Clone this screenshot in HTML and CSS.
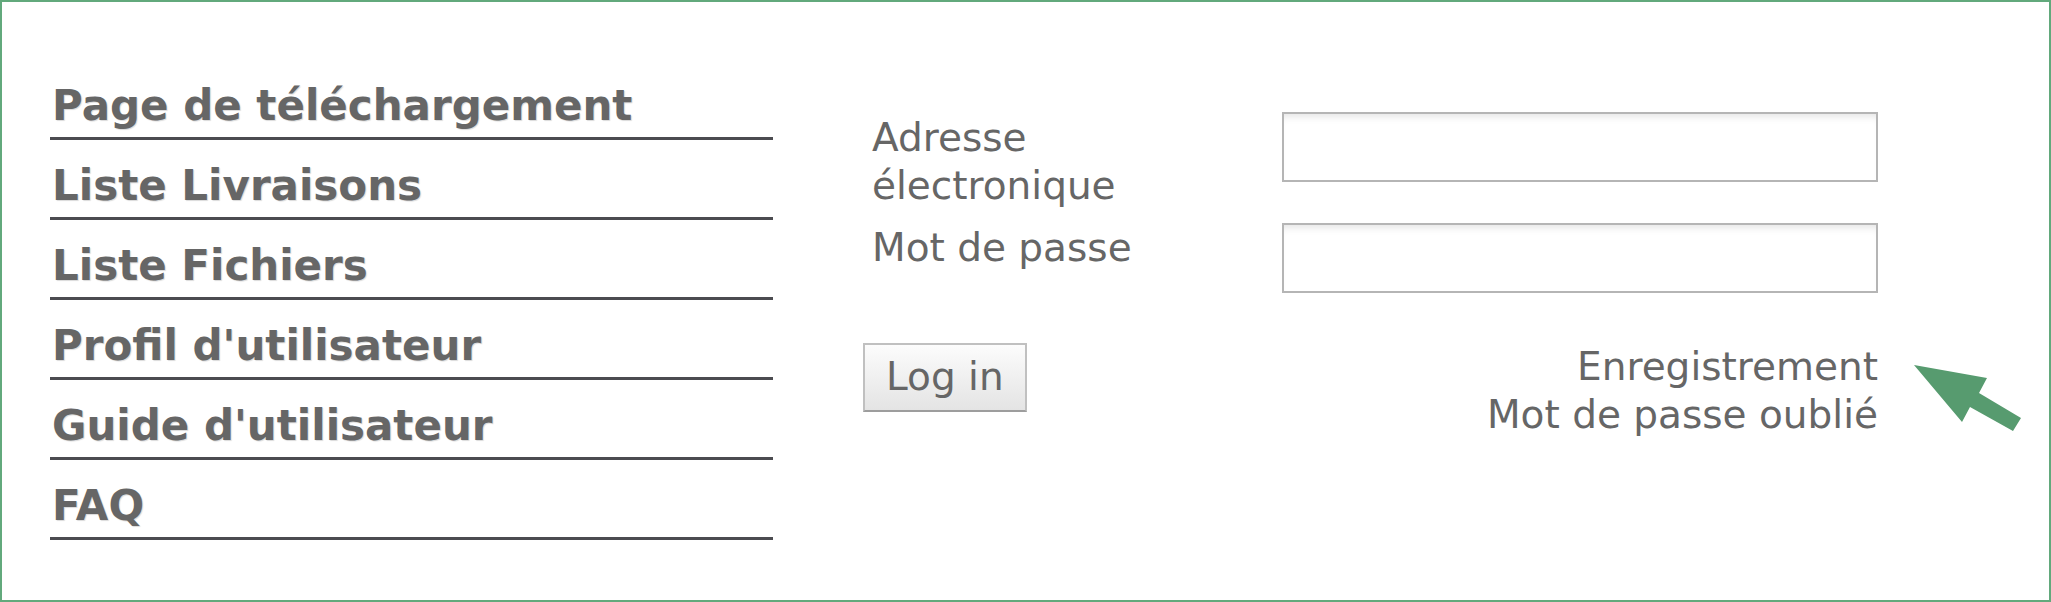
FILE: index.html
```html
<!DOCTYPE html>
<html lang="fr">
<head>
  <meta charset="UTF-8">
  <title>Connexion</title>
  <link rel="stylesheet" href="styles.css">
</head>
<body>
  <div class="frame">
    <!-- Menu de gauche -->
    <ul class="menu">
      <li><a href="#">Page de téléchargement</a></li>
      <li><a href="#">Liste Livraisons</a></li>
      <li><a href="#">Liste Fichiers</a></li>
      <li><a href="#">Profil d'utilisateur</a></li>
      <li><a href="#">Guide d'utilisateur</a></li>
      <li><a href="#">FAQ</a></li>
    </ul>

    <!-- Formulaire de connexion -->
    <form class="login" onsubmit="return false">
      <div class="fields">
        <label for="email">Adresse<br>électronique</label>
        <input type="text" id="email">
        <label for="pass">Mot de passe</label>
        <input type="password" id="pass" class="second">
      </div>
      <div class="actions">
        <button type="submit">Log in</button>
        <div class="links">
          <a href="#">Enregistrement</a>
          <a href="#">Mot de passe oublié</a>
        </div>
      </div>
    </form>

    <svg class="pointer" width="120" height="80" viewBox="1910 360 120 80">
      <polygon points="1914,365 1987,378 1979,393 2021,418 2013,431 1970,407 1962,422" fill="#579b6f"/>
    </svg>
  </div>
</body>
</html>
```

FILE: styles.css
```css
body {
  margin: 0;
  font-family: 'DejaVu Sans', 'Verdana', sans-serif;
  color: #666;
  background: #fff;
}

.frame {
  position: relative;
  box-sizing: border-box;
  width: 2051px;
  height: 602px;
  border: 2px solid #62a97c;
  display: flex;
  align-items: flex-start;
  gap: 90px;
  padding: 58px 0 0 48px;
}

.menu {
  list-style: none;
  margin: 0;
  padding: 0;
  width: 723px;
}

.menu li {
  padding: 22px 0 7px 2px;
  border-bottom: 3px solid #4b4b50;
  font-size: 42px;
  line-height: 48px;
}

.menu a {
  font-weight: bold;
  color: #666;
  text-decoration: none;
  text-shadow: 1px 1px 1px rgba(0, 0, 0, 0.15);
}

.login {
  margin-top: 52px;
  display: flex;
  flex-direction: column;
  width: 1015px;
}

.fields {
  display: grid;
  grid-template-columns: 419px 596px;
  row-gap: 12px;
  align-items: start;
}

.fields label {
  font-size: 39px;
  line-height: 48px;
  padding: 2px 0 0 9px;
}

.fields input {
  box-sizing: border-box;
  height: 70px;
  width: 596px;
  margin: 0;
  border: 2px solid #b5b5b5;
  background: #fff;
  box-shadow: inset 0 8px 8px -6px rgba(0, 0, 0, 0.12);
  font-size: 30px;
  font-family: inherit;
  outline: none;
}

.fields input.second {
  margin-top: 1px;
}

.actions {
  display: flex;
  justify-content: space-between;
  align-items: flex-start;
  margin-top: 50px;
}

.actions button {
  box-sizing: border-box;
  height: 69px;
  padding: 8px 21px 9px;
  border: 2px solid #c0c0c0;
  border-bottom-color: #9d9d9d;
  background: linear-gradient(#fcfcfc, #e4e4e4);
  font-family: inherit;
  font-size: 39px;
  line-height: 48px;
  color: #666;
  cursor: pointer;
}

.links {
  display: flex;
  flex-direction: column;
  align-items: flex-end;
}

.links a {
  font-size: 39px;
  line-height: 48px;
  color: #666;
  text-decoration: none;
}

.pointer {
  position: absolute;
  left: 1908px;
  top: 358px;
}
```
